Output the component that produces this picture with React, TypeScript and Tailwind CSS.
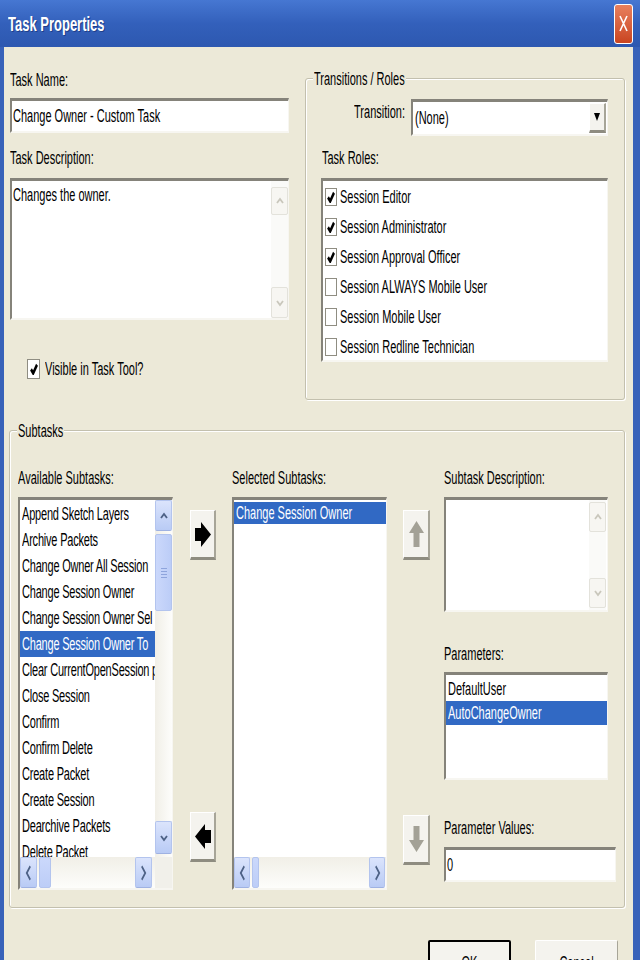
import type { ReactNode } from "react";

type Dir = "up" | "down" | "left" | "right";

const sunken =
  "border-t-[3px] border-l-2 border-r border-b-2 border-t-[#85837a] border-l-[#85837a] border-r-[#f7f6f1] border-b-[#f7f6f1] bg-white";

const raised =
  "border-t border-l border-r-2 border-b-[3px] border-t-white border-l-white border-r-[#a7a598] border-b-[#8e8c80] bg-[#f4f3ee]";

/* text in this shot is stretched vertically, so every label gets the same scale */
function T({ children, className = "" }: { children: ReactNode; className?: string }) {
  return <span className={`inline-block scale-y-[1.7] whitespace-nowrap ${className}`}>{children}</span>;
}

const chevronPoints: Record<Dir, string> = {
  up: "1,8 4,4 7,8",
  down: "1,4 4,8 7,4",
  left: "6,1 2,6 6,11",
  right: "2,1 6,6 2,11",
};

function Chevron({ dir, disabled }: { dir: Dir; disabled?: boolean }) {
  const vertical = dir === "up" || dir === "down";
  return (
    <svg
      viewBox="0 0 8 12"
      preserveAspectRatio="none"
      className={vertical ? "h-[12px] w-[8px]" : "h-[16px] w-[7px]"}
    >
      <polyline
        points={chevronPoints[dir]}
        fill="none"
        stroke={disabled ? "#c9c7bc" : "#4d6185"}
        strokeWidth="1.8"
      />
    </svg>
  );
}

function ScrollBtn({ dir, disabled, className }: { dir: Dir; disabled?: boolean; className: string }) {
  return (
    <div
      className={`flex shrink-0 items-center justify-center rounded-[2px] border ${
        disabled
          ? "border-[#e3e2db] bg-[#f7f6f2]"
          : "border-[#b3c4ee] border-b-[#9fb2e2] bg-linear-to-b from-[#dbe4fc] to-[#b9cbf5]"
      } ${className}`}
    >
      <Chevron dir={dir} disabled={disabled} />
    </div>
  );
}

function Check({ checked, big }: { checked: boolean; big?: boolean }) {
  return (
    <div
      className={`flex shrink-0 items-center justify-center border border-[#8f8d82] bg-white ${
        big ? "h-[20px] w-[13px]" : "h-[18px] w-[12px]"
      }`}
    >
      {checked && (
        <svg viewBox="0 0 8 8" preserveAspectRatio="none" className="h-[12px] w-[8px]">
          <path d="M1 4.2 L3.2 6.8 L7 1.2" fill="none" stroke="#000" strokeWidth="2.3" />
        </svg>
      )}
    </div>
  );
}

function BlockArrow({ dir, disabled }: { dir: Dir; disabled?: boolean }) {
  const fill = disabled ? "#a3a196" : "#000";
  if (dir === "right")
    return (
      <svg viewBox="0 0 16 25" preserveAspectRatio="none" className="h-[25px] w-[16px]">
        <path d="M0 6 H6 V0 L16 12.5 L6 25 V19 H0 Z" fill={fill} />
      </svg>
    );
  if (dir === "left")
    return (
      <svg viewBox="0 0 16 25" preserveAspectRatio="none" className="h-[25px] w-[16px]">
        <path d="M16 6 H10 V0 L0 12.5 L10 25 V19 H16 Z" fill={fill} />
      </svg>
    );
  if (dir === "up")
    return (
      <svg viewBox="0 0 15 26" preserveAspectRatio="none" className="h-[26px] w-[15px]">
        <path d="M7.5 0 L15 12 H10.5 V26 H4.5 V12 H0 Z" fill={fill} />
      </svg>
    );
  return (
    <svg viewBox="0 0 15 26" preserveAspectRatio="none" className="h-[26px] w-[15px]">
      <path d="M7.5 26 L15 14 H10.5 V0 H4.5 V14 H0 Z" fill={fill} />
    </svg>
  );
}

function GroupBox({ label, className, children }: { label: string; className: string; children: ReactNode }) {
  return (
    <div
      className={`relative rounded-[3px] border border-[#c3c0ae] shadow-[inset_1px_1px_0_#fff,1px_1px_0_#fff] ${className}`}
    >
      <span className="absolute -top-[10px] left-[7px] flex h-[20px] items-center bg-[#ece9d8] px-[1px]">
        <T>{label}</T>
      </span>
      {children}
    </div>
  );
}

function Label({ children, className = "" }: { children: ReactNode; className?: string }) {
  return (
    <div className={`flex h-[20px] items-center ${className}`}>
      <T>{children}</T>
    </div>
  );
}

const roles = [
  { name: "Session Editor", on: true },
  { name: "Session Administrator", on: true },
  { name: "Session Approval Officer", on: true },
  { name: "Session ALWAYS Mobile User", on: false },
  { name: "Session Mobile User", on: false },
  { name: "Session Redline Technician", on: false },
];

// names that run under the scrollbar are kept as far as they show
const available = [
  "Append Sketch Layers",
  "Archive Packets",
  "Change Owner All Session",
  "Change Session Owner",
  "Change Session Owner Sel",
  "Change Session Owner To",
  "Clear CurrentOpenSession p",
  "Close Session",
  "Confirm",
  "Confirm Delete",
  "Create Packet",
  "Create Session",
  "Dearchive Packets",
  "Delete Packet",
];

export default function App() {
  return (
    <div className="flex h-[960px] w-[640px] flex-col overflow-hidden bg-[#3862b9] font-['Liberation_Sans',Arial,sans-serif] text-[11px] leading-[13px] text-black">
      {/* Title bar */}
      <div className="flex h-[47px] shrink-0 items-center bg-linear-to-b from-[#4677d2] via-[#3360bb] to-[#2d58b0] pl-[8px] pr-[7px]">
        <span className="inline-block scale-y-[1.6] whitespace-nowrap text-[13px] font-bold text-white [text-shadow:1px_1px_0_#1f3f8a]">
          Task Properties
        </span>
        <div className="ml-auto flex h-[40px] w-[19px] items-center justify-center rounded-[3px] border border-white bg-linear-to-b from-[#e8805d] to-[#c9441f]">
          <svg viewBox="0 0 9 17" className="h-[17px] w-[9px]">
            <path d="M1 1 L8 16 M8 1 L1 16" stroke="#fff" strokeWidth="1.6" />
          </svg>
        </div>
      </div>

      {/* Body */}
      <div className="ml-[4px] mr-[7px] flex flex-1 flex-col bg-[#ece9d8]">
        <div className="flex items-start">
          {/* Left column */}
          <div className="ml-[6px] flex w-[279px] flex-col pt-[23px]">
            <Label>Task Name:</Label>
            <div className={`${sunken} mt-[8px] flex h-[35px] items-center pl-[1px]`}>
              <T>Change Owner - Custom Task</T>
            </div>
            <Label className="mt-[15px]">Task Description:</Label>
            <div className={`${sunken} mt-[10px] flex h-[142px]`}>
              <div className="flex-1 pl-[1px] pt-[8px]">
                <T>Changes the owner.</T>
              </div>
              <div className="flex w-[17px] flex-col bg-[#fafaf8]">
                <ScrollBtn dir="up" disabled className="mt-[6px] h-[28px]" />
                <div className="flex-1" />
                <ScrollBtn dir="down" disabled className="h-[31px]" />
              </div>
            </div>
            <div className="mt-[38px] flex h-[22px] items-center gap-[5px] pl-[17px]">
              <Check checked big />
              <T>Visible in Task Tool?</T>
            </div>
          </div>

          {/* Transitions / Roles */}
          <GroupBox label="Transitions / Roles" className="ml-[16px] mt-[31px] h-[322px] w-[320px]">
            <div className="mt-[20px] flex">
              <div className="flex h-[26px] w-[100px] items-center justify-end pr-[1px]">
                <T>Transition:</T>
              </div>
              <div className={`${sunken} ml-[5px] flex h-[37px] w-[197px]`}>
                <div className="flex flex-1 items-center pl-[2px]">
                  <T>(None)</T>
                </div>
                <div className={`${raised} mr-[1px] mt-[1px] flex h-[30px] w-[17px] items-center justify-center`}>
                  <svg viewBox="0 0 6 6" preserveAspectRatio="none" className="h-[8px] w-[6px]">
                    <path d="M0 0 H6 L3 6 Z" fill="#000" />
                  </svg>
                </div>
              </div>
            </div>
            <Label className="mt-[12px] pl-[16px]">Task Roles:</Label>
            <div className={`${sunken} ml-[15px] mt-[10px] h-[184px] w-[287px] pl-[2px] pt-[1px]`}>
              {roles.map((r) => (
                <div key={r.name} className="flex h-[30px] items-center gap-[3px]">
                  <Check checked={r.on} />
                  <T>{r.name}</T>
                </div>
              ))}
            </div>
          </GroupBox>
        </div>

        {/* Subtasks */}
        <GroupBox label="Subtasks" className="ml-[5px] mt-[30px] h-[478px] w-[616px]">
          <div className="flex pl-[8px] pt-[37px]">
            {/* Available */}
            <div className="flex w-[155px] flex-col">
              <Label>Available Subtasks:</Label>
              <div className={`${sunken} mt-[9px] flex h-[393px] flex-col`}>
                <div className="flex min-h-0 flex-1">
                  <div className="min-w-0 flex-1 overflow-hidden pt-[1px]">
                    {available.map((s, i) => (
                      <div
                        key={s}
                        className={`flex h-[26px] items-center pl-[2px] ${
                          i === 5 ? "bg-[#3169c4] text-white" : ""
                        }`}
                      >
                        <T className="tracking-[-0.2px]">{s}</T>
                      </div>
                    ))}
                  </div>
                  <div className="flex w-[17px] flex-col bg-linear-to-r from-[#f1efe7] to-[#fdfdfb]">
                    <ScrollBtn dir="up" className="h-[31px]" />
                    <div className="mt-[3px] flex h-[77px] flex-col items-center justify-center gap-[2px] rounded-[2px] border border-[#b3c4ee] bg-linear-to-r from-[#cbd8fb] to-[#bccdf7]">
                      <div className="h-px w-[6px] bg-[#8ea4dc]" />
                      <div className="h-px w-[6px] bg-[#8ea4dc]" />
                      <div className="h-px w-[6px] bg-[#8ea4dc]" />
                      <div className="h-px w-[6px] bg-[#8ea4dc]" />
                    </div>
                    <div className="flex-1" />
                    <ScrollBtn dir="down" className="mb-[3px] h-[33px]" />
                  </div>
                </div>
                <div className="flex h-[31px]">
                  <div className="flex flex-1 bg-linear-to-b from-[#f1efe7] to-[#fdfdfb]">
                    <ScrollBtn dir="left" className="w-[17px]" />
                    <div className="ml-[2px] w-[12px] rounded-[2px] border border-[#b3c4ee] bg-linear-to-b from-[#cbd8fb] to-[#bccdf7]" />
                    <div className="flex-1" />
                    <ScrollBtn dir="right" className="mr-[3px] w-[17px]" />
                  </div>
                  <div className="w-[17px] bg-[#f1f0ea]" />
                </div>
              </div>
            </div>

            {/* Add / remove */}
            <div className="ml-[17px] flex w-[26px] flex-col pt-[42px]">
              <div className={`${raised} flex h-[50px] items-center justify-center`}>
                <BlockArrow dir="right" />
              </div>
              <div className={`${raised} mt-[252px] flex h-[50px] items-center justify-center`}>
                <BlockArrow dir="left" />
              </div>
            </div>

            {/* Selected */}
            <div className="ml-[16px] flex w-[155px] flex-col">
              <Label>Selected Subtasks:</Label>
              <div className={`${sunken} mt-[9px] flex h-[393px] flex-col`}>
                <div className="flex-1 overflow-hidden pt-[2px]">
                  <div className="flex h-[22px] items-center bg-[#3169c4] pl-[2px] text-white">
                    <T>Change Session Owner</T>
                  </div>
                </div>
                <div className="flex h-[31px] bg-linear-to-b from-[#f1efe7] to-[#fdfdfb]">
                  <ScrollBtn dir="left" className="w-[16px]" />
                  <div className="ml-[2px] w-[7px] rounded-[2px] border border-[#b3c4ee] bg-linear-to-b from-[#cbd8fb] to-[#bccdf7]" />
                  <div className="flex-1" />
                  <ScrollBtn dir="right" className="mr-[1px] w-[16px]" />
                </div>
              </div>
            </div>

            {/* Move up / down */}
            <div className="ml-[16px] flex w-[27px] flex-col pt-[42px]">
              <div className={`${raised} flex h-[50px] items-center justify-center`}>
                <BlockArrow dir="up" disabled />
              </div>
              <div className={`${raised} mt-[255px] flex h-[50px] items-center justify-center`}>
                <BlockArrow dir="down" disabled />
              </div>
            </div>

            {/* Description / parameters */}
            <div className="ml-[14px] flex w-[172px] flex-col">
              <Label>Subtask Description:</Label>
              <div className={`${sunken} mt-[9px] flex h-[115px] w-[164px]`}>
                <div className="flex-1" />
                <div className="mr-[1px] flex w-[17px] flex-col bg-[#fafaf8]">
                  <ScrollBtn dir="up" disabled className="mt-[2px] h-[30px]" />
                  <div className="flex-1" />
                  <ScrollBtn dir="down" disabled className="mb-[2px] h-[30px]" />
                </div>
              </div>
              <Label className="mt-[32px]">Parameters:</Label>
              <div className={`${sunken} mt-[8px] h-[108px] w-[164px] pt-[2px]`}>
                <div className="flex h-[24px] items-center pl-[2px]">
                  <T>DefaultUser</T>
                </div>
                <div className="flex h-[24px] items-center bg-[#3169c4] pl-[2px] text-white">
                  <T>AutoChangeOwner</T>
                </div>
              </div>
              <Label className="mt-[38px]">Parameter Values:</Label>
              <div className={`${sunken} mt-[9px] flex h-[35px] items-center pl-[1px]`}>
                <T>0</T>
              </div>
            </div>
          </div>
        </GroupBox>

        {/* Dialog buttons */}
        <div className="mt-[32px] flex justify-end gap-[24px] pr-[15px]">
          <div className="flex h-[46px] w-[83px] items-center justify-center rounded-[2px] border-2 border-black bg-[#f4f3ee]">
            <T>OK</T>
          </div>
          <div className="flex h-[46px] w-[83px] items-center justify-center rounded-[2px] border border-[#a7a598] border-t-white border-l-white bg-[#f4f3ee]">
            <T>Cancel</T>
          </div>
        </div>
      </div>
    </div>
  );
}
